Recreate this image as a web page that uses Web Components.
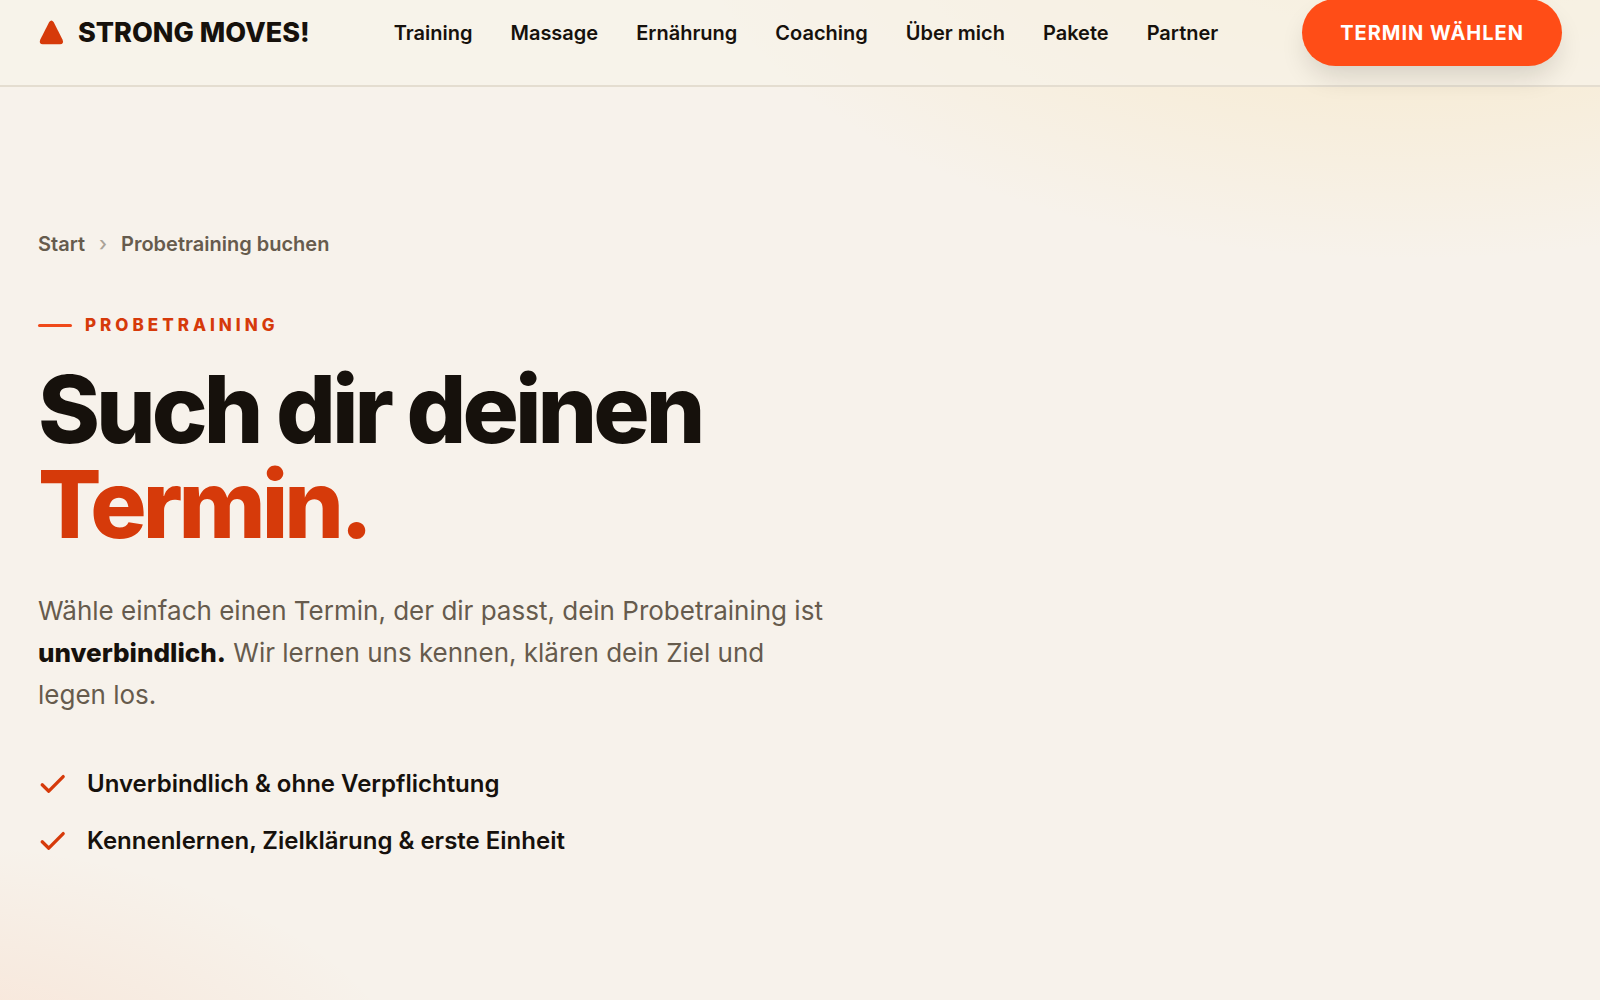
<!DOCTYPE html>
<html lang="de">
<head>
<meta charset="utf-8">
<meta name="viewport" content="width=device-width, initial-scale=1">
<title>Probetraining buchen – Strong Moves!</title>
<style>
  :root {
    --ink: #16110c;
    --muted: #665b4d;
    --accent: #d63a0a;
    --flame: #ff4d17;
    --paper: #f7f2eb;
    --gutter: 38px;
  }
  html { background: var(--paper); }
  body {
    margin: 0;
    color: var(--ink);
    font-family: Inter, "Liberation Sans", sans-serif;
    -webkit-font-smoothing: antialiased;
  }
</style>
</head>
<body>
<sm-page>
  <sm-header slot="header">
    <sm-logo slot="brand">STRONG MOVES!</sm-logo>
    <sm-nav-link href="#training">Training</sm-nav-link>
    <sm-nav-link href="#massage">Massage</sm-nav-link>
    <sm-nav-link href="#ernaehrung">Ernährung</sm-nav-link>
    <sm-nav-link href="#coaching">Coaching</sm-nav-link>
    <sm-nav-link href="#ueber-mich">Über mich</sm-nav-link>
    <sm-nav-link href="#pakete">Pakete</sm-nav-link>
    <sm-nav-link href="#partner">Partner</sm-nav-link>
    <sm-button slot="action">TERMIN WÄHLEN</sm-button>
  </sm-header>
  <sm-hero></sm-hero>
</sm-page>

<script>
const define = (name, html, setup) => {
  const template = document.createElement('template');
  template.innerHTML = html;
  customElements.define(name, class extends HTMLElement {
    constructor() {
      super();
      this.attachShadow({ mode: 'open' }).append(template.content.cloneNode(true));
    }
    connectedCallback() { if (setup) setup(this, this.shadowRoot); }
  });
};

define('sm-page', `
  <style>
    :host {
      display: flex; flex-direction: column; min-height: 100vh; overflow: hidden;
      background:
        radial-gradient(720px 360px at 88% -100px, rgba(247, 205, 105, .3), rgba(247, 205, 105, 0)),
        radial-gradient(520px 260px at -100px calc(100% + 100px), rgba(255, 115, 45, .13), rgba(255, 115, 45, 0)),
        var(--paper);
    }
    main { flex: 1; }
  </style>
  <slot name="header"></slot>
  <main><slot></slot></main>`);

define('sm-header', `
  <style>
    :host { display: block; margin-top: -20px; }
    header {
      display: flex; align-items: center; justify-content: space-between;
      height: 105px; padding: 0 var(--gutter);
      background: rgba(247, 242, 233, .72);
      border-bottom: 2px solid #e4ddd0;
    }
    nav { display: flex; gap: 38px; }
  </style>
  <header>
    <slot name="brand"></slot>
    <nav aria-label="Hauptnavigation"><slot></slot></nav>
    <slot name="action"></slot>
  </header>`);

define('sm-logo', `
  <style>
    :host { display: block; }
    a {
      display: flex; align-items: center; gap: 13px; color: inherit; text-decoration: none;
      font-size: 27px; line-height: 35px; font-weight: 800; white-space: nowrap;
    }
    svg { width: 27px; height: 27px; fill: var(--accent); }
  </style>
  <a href="#start">
    <svg viewBox="0 0 27 27" aria-hidden="true"><path d="M11.200 3.100Q13.400 0 15.600 3.100L24.600 20.800Q26.200 25.200 22 25.200H4.800Q.6 25.200 2.200 20.800Z"/></svg>
    <slot></slot>
  </a>`);

define('sm-nav-link', `
  <style>
    :host { display: block; }
    a { color: inherit; text-decoration: none; font-size: 20px; line-height: 30px; font-weight: 600; white-space: nowrap; }
  </style>
  <a><slot></slot></a>`, (el, root) => { root.querySelector('a').href = el.getAttribute('href'); });

define('sm-button', `
  <style>
    :host { display: block; }
    button {
      display: block; height: 67px; padding: 0 38px; border: 0; border-radius: 34px;
      background: var(--flame); color: #fff; font: inherit; font-size: 20px; font-weight: 700;
      letter-spacing: 1px; white-space: nowrap;
      box-shadow: 0 14px 28px -6px rgba(22, 17, 12, .16);
    }
  </style>
  <button type="button"><slot></slot></button>`);

define('sm-breadcrumb', `
  <style>
    :host { display: block; }
    ol { display: flex; gap: 14px; margin: 0; padding: 0; list-style: none; color: var(--muted); font-size: 20px; line-height: 30px; font-weight: 600; }
    li { display: flex; gap: 14px; }
    li + li::before { content: "›"; color: #aaa398; font-weight: 500; }
    a { color: inherit; text-decoration: none; }
  </style>
  <nav aria-label="Brotkrumen"><ol>
    <li><a href="#start">Start</a></li>
    <li aria-current="page">Probetraining buchen</li>
  </ol></nav>`);

define('sm-eyebrow', `
  <style>
    :host { display: flex; align-items: center; gap: 13px; color: var(--accent); font-size: 17px; line-height: 26px; font-weight: 800; letter-spacing: 4px; }
    :host::before { content: ""; width: 34px; height: 3px; border-radius: 2px; background: #f04a1a; }
  </style>
  <slot></slot>`);

define('sm-check', `
  <style>
    :host { display: flex; align-items: center; gap: 19px; font-size: 24px; line-height: 38px; font-weight: 600; }
    svg { width: 30px; height: 30px; fill: none; stroke: var(--accent); stroke-width: 3.3; stroke-linecap: round; stroke-linejoin: round; }
  </style>
  <svg viewBox="0 0 30 30" aria-hidden="true"><path d="M4.200 15.800L10.800 22.200L25.200 7.600"/></svg>
  <span><slot></slot></span>`);

define('sm-hero', `
  <style>
    :host { display: block; padding: 142px var(--gutter) 96px; }
    sm-eyebrow { margin-top: 53px; }
    h1 { margin: 24px 0 0; font-size: 94px; line-height: 95px; font-weight: 800; letter-spacing: -4px; }
    h1 span { display: block; color: var(--accent); }
    p { max-width: 792px; margin: 38px 0 0; color: var(--muted); font-size: 26px; line-height: 42px; }
    strong { color: var(--ink); font-weight: 800; }
    ul { display: grid; gap: 19px; margin: 49px 0 0; padding: 0; list-style: none; }
  </style>
  <sm-breadcrumb></sm-breadcrumb>
  <sm-eyebrow>PROBETRAINING</sm-eyebrow>
  <h1>Such dir deinen <span>Termin.</span></h1>
  <p>Wähle einfach einen Termin, der dir passt, dein Probetraining ist <strong>unverbindlich.</strong> Wir lernen uns kennen, klären dein Ziel und legen los.</p>
  <ul>
    <li><sm-check>Unverbindlich &amp; ohne Verpflichtung</sm-check></li>
    <li><sm-check>Kennenlernen, Zielklärung &amp; erste Einheit</sm-check></li>
  </ul>`);
</script>
</body>
</html>
